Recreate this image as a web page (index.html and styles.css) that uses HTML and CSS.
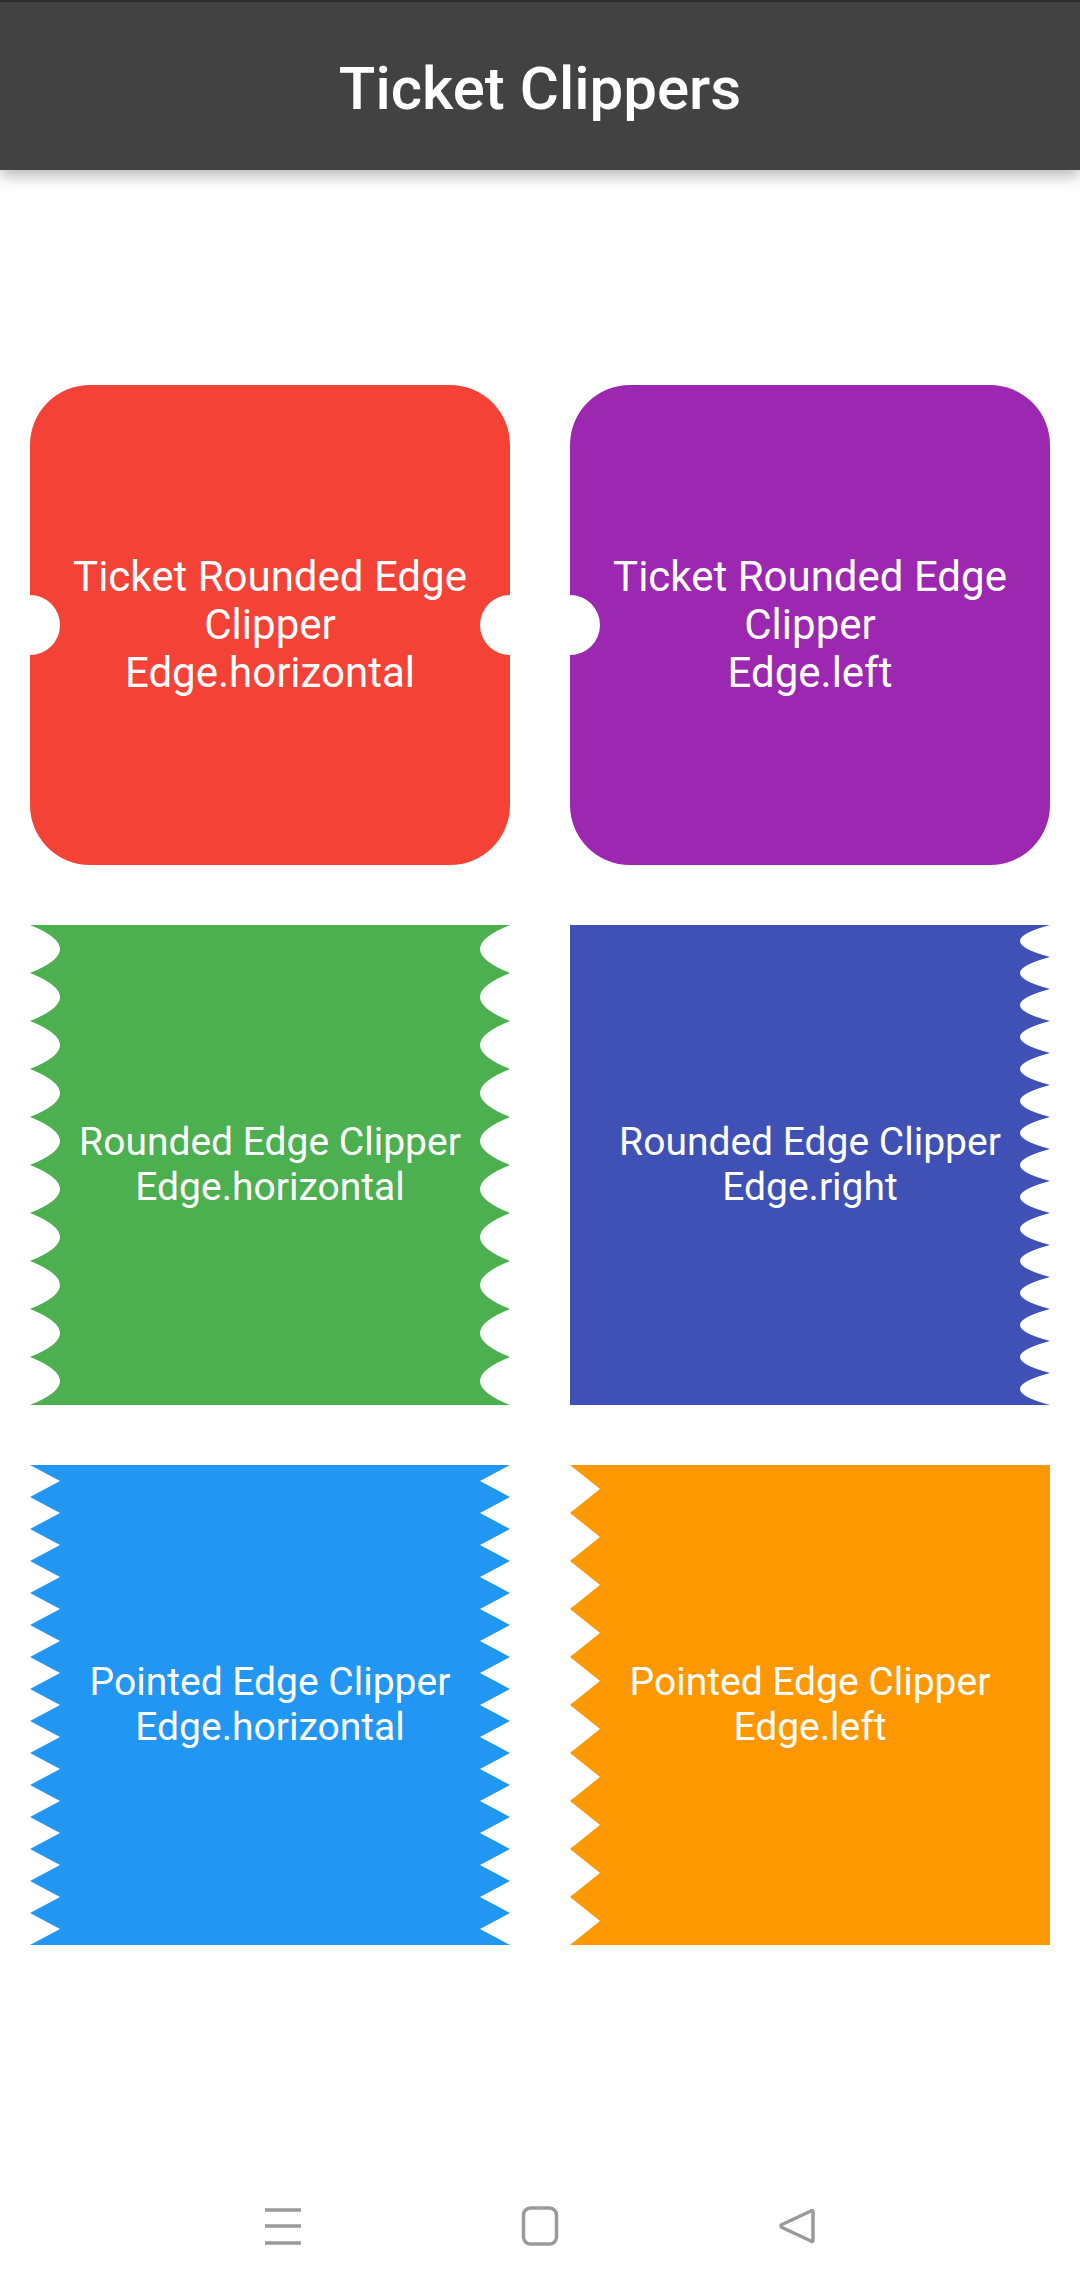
FILE: index.html
```html
<!DOCTYPE html>
<html lang="en">
<head>
<meta charset="utf-8">
<title>Ticket Clippers</title>
<link rel="stylesheet" href="styles.css">
</head>
<body>
<div class="screen">
  <header class="appbar">
    <h1 class="appbar-title">Ticket Clippers</h1>
  </header>
  <main class="content">
    <div class="grid">
      <div class="card card-red"><p class="card-text">Ticket Rounded Edge Clipper<br>Edge.horizontal</p></div>
      <div class="card card-purple"><p class="card-text">Ticket Rounded Edge Clipper<br>Edge.left</p></div>
      <div class="card card-green"><p class="card-text card-text-sm">Rounded Edge Clipper<br>Edge.horizontal</p></div>
      <div class="card card-indigo"><p class="card-text card-text-sm">Rounded Edge Clipper<br>Edge.right</p></div>
      <div class="card card-blue"><p class="card-text card-text-sm">Pointed Edge Clipper<br>Edge.horizontal</p></div>
      <div class="card card-orange"><p class="card-text card-text-sm">Pointed Edge Clipper<br>Edge.left</p></div>
    </div>
  </main>
  <nav class="navbar">
    <svg class="nav-icon" width="40" height="40" viewBox="0 0 40 40" aria-label="menu">
      <path d="M2 4 H38 M2 20 H38 M2 37 H38" stroke="#9a9a9a" stroke-width="3.5" fill="none"/>
    </svg>
    <svg class="nav-icon" width="40" height="40" viewBox="0 0 40 40" aria-label="home">
      <rect x="3.5" y="2" width="33" height="36" rx="7" ry="7" stroke="#9a9a9a" stroke-width="3.5" fill="none"/>
    </svg>
    <svg class="nav-icon" width="40" height="40" viewBox="0 0 40 40" aria-label="back">
      <path d="M34 5 Q36 3.5 36 6 V34 Q36 36.5 34 35 L5 21.5 Q3 20 5 18.5 Z" stroke="#9a9a9a" stroke-width="3.5" stroke-linejoin="round" fill="none"/>
    </svg>
  </nav>
</div>
</body>
</html>
```

FILE: styles.css
```css
html, body {
  margin: 0;
  padding: 0;
  background: #ffffff;
}

body {
  font-family: Roboto, "Noto Sans", "Liberation Sans", sans-serif;
}

.screen {
  width: 1080px;
  height: 2292px;
  display: flex;
  flex-direction: column;
  overflow: hidden;
}

.appbar {
  height: 168px;
  box-sizing: content-box;
  border-top: 2px solid #2c2c2c;
  background: #424242;
  display: flex;
  align-items: center;
  justify-content: center;
  box-shadow: 0 6px 14px rgba(0, 0, 0, 0.28);
  position: relative;
  z-index: 1;
  flex: none;
}

.appbar-title {
  margin: 0;
  padding-top: 6px;
  color: #ffffff;
  font-size: 60px;
  font-weight: 500;
  letter-spacing: 0;
  line-height: 1;
}

.content {
  flex: 1;
  display: flex;
  align-items: center;
  justify-content: center;
}

.grid {
  display: grid;
  grid-template-columns: 480px 480px;
  grid-auto-rows: 480px;
  gap: 60px;
}

.card {
  width: 480px;
  height: 480px;
  display: flex;
  align-items: center;
  justify-content: center;
  box-sizing: border-box;
  padding: 0 30px;
}

.card-text {
  margin: 0;
  color: #ffffff;
  font-size: 42px;
  line-height: 48px;
  text-align: center;
}

.card-text-sm {
  font-size: 39px;
  line-height: 45.5px;
}

.card-red {
  background: #f44336;
  clip-path: path("M60 0 H420 A60 60 0 0 1 480 60 V210 A30 30 0 0 0 480 270 V420 A60 60 0 0 1 420 480 H60 A60 60 0 0 1 0 420 V270 A30 30 0 0 0 0 210 V60 A60 60 0 0 1 60 0 Z");
}

.card-purple {
  background: #9c27b0;
  clip-path: path("M60 0 H420 A60 60 0 0 1 480 60 V420 A60 60 0 0 1 420 480 H60 A60 60 0 0 1 0 420 V270 A30 30 0 0 0 0 210 V60 A60 60 0 0 1 60 0 Z");
}

.card-green {
  background: #4caf50;
  clip-path: path("M0 0 H480 q-60 24 0 48 q-60 24 0 48 q-60 24 0 48 q-60 24 0 48 q-60 24 0 48 q-60 24 0 48 q-60 24 0 48 q-60 24 0 48 q-60 24 0 48 q-60 24 0 48 H0 q60 -24 0 -48 q60 -24 0 -48 q60 -24 0 -48 q60 -24 0 -48 q60 -24 0 -48 q60 -24 0 -48 q60 -24 0 -48 q60 -24 0 -48 q60 -24 0 -48 q60 -24 0 -48 Z");
}

.card-indigo {
  background: #3f51b5;
  clip-path: path("M0 0 H480 q-60 16 0 32 q-60 16 0 32 q-60 16 0 32 q-60 16 0 32 q-60 16 0 32 q-60 16 0 32 q-60 16 0 32 q-60 16 0 32 q-60 16 0 32 q-60 16 0 32 q-60 16 0 32 q-60 16 0 32 q-60 16 0 32 q-60 16 0 32 q-60 16 0 32 H0 Z");
}

.card-blue {
  background: #2196f3;
  clip-path: path("M0 0 H480 l-30 16 l30 16 l-30 16 l30 16 l-30 16 l30 16 l-30 16 l30 16 l-30 16 l30 16 l-30 16 l30 16 l-30 16 l30 16 l-30 16 l30 16 l-30 16 l30 16 l-30 16 l30 16 l-30 16 l30 16 l-30 16 l30 16 l-30 16 l30 16 l-30 16 l30 16 l-30 16 l30 16 H0 l30 -16 l-30 -16 l30 -16 l-30 -16 l30 -16 l-30 -16 l30 -16 l-30 -16 l30 -16 l-30 -16 l30 -16 l-30 -16 l30 -16 l-30 -16 l30 -16 l-30 -16 l30 -16 l-30 -16 l30 -16 l-30 -16 l30 -16 l-30 -16 l30 -16 l-30 -16 l30 -16 l-30 -16 l30 -16 l-30 -16 l30 -16 l-30 -16 Z");
}

.card-orange {
  background: #ff9800;
  clip-path: path("M0 0 H480 V480 H0 l30 -24 l-30 -24 l30 -24 l-30 -24 l30 -24 l-30 -24 l30 -24 l-30 -24 l30 -24 l-30 -24 l30 -24 l-30 -24 l30 -24 l-30 -24 l30 -24 l-30 -24 l30 -24 l-30 -24 l30 -24 l-30 -24 Z");
}

.navbar {
  height: 132px;
  flex: none;
  display: flex;
  align-items: center;
  justify-content: center;
  gap: 217px;
  background: #ffffff;
}

.nav-icon {
  display: block;
}
```
